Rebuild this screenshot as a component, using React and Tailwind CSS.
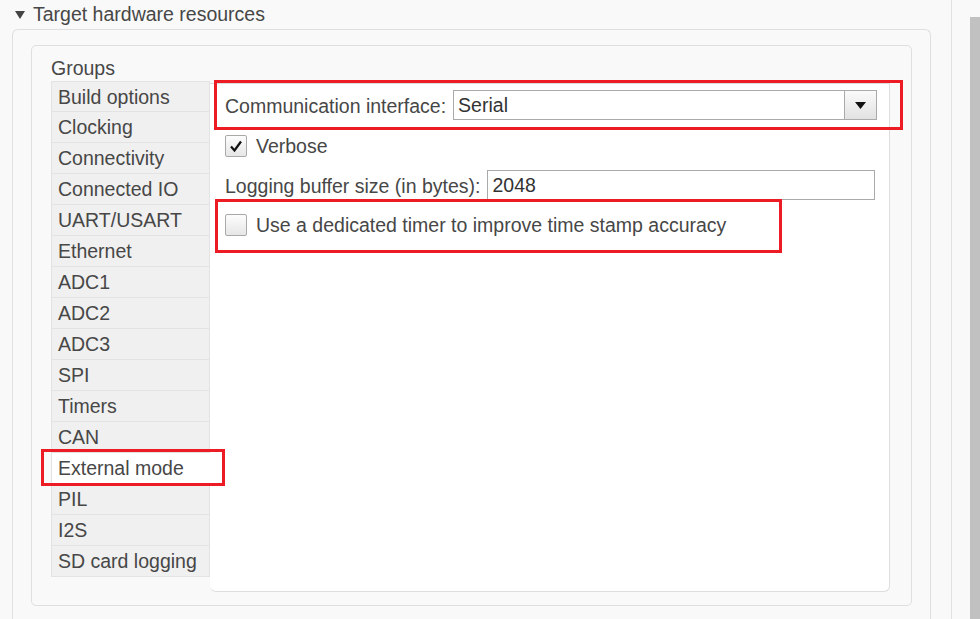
import React from "react";

const GROUPS = [
    "Build options",
    "Clocking",
    "Connectivity",
    "Connected IO",
    "UART/USART",
    "Ethernet",
    "ADC1",
    "ADC2",
    "ADC3",
    "SPI",
    "Timers",
    "CAN",
    "External mode",
    "PIL",
    "I2S",
    "SD card logging"
];

const SELECTED = "External mode";

// Checkbox in the old desktop style
const Checkbox = ({ checked }) => (
    <div className="w-[22px] h-[22px] border border-[#a9a9a9] rounded-[2px] bg-gradient-to-b from-[#fdfdfd] to-[#e6e6e6] flex items-center justify-center">
        {checked && (
            <svg width="14" height="14" viewBox="0 0 14 14">
                <path d="M2 7.5 L5.5 11.5 L12 2.5" fill="none" stroke="#111" strokeWidth="2.2" strokeLinejoin="miter" />
            </svg>
        )}
    </div>
);

export default function App() {
    return (
        <div
            className="relative w-[980px] h-[619px] overflow-hidden bg-[#f9f9f9] flex text-[19.5px] text-[#474747]"
            style={{ fontFamily: '"Liberation Sans", Arial, sans-serif' }}
        >
            {/* Main column */}
            <div className="w-[952px] h-full border-r border-[#e2e2e2] flex flex-col">
                {/* Section header */}
                <div className="h-[29px] flex items-center pl-[15px] gap-[8px]">
                    <svg width="10" height="8" viewBox="0 0 10 8">
                        <path d="M0 0 L10 0 L5 8 Z" fill="#444" />
                    </svg>
                    <span className="leading-none">Target hardware resources</span>
                </div>

                {/* Outer panel */}
                <div className="ml-[12px] w-[919px] flex-1 border border-b-0 border-[#dfdfdf] rounded-t-[6px] pt-[15px] pl-[18px]">
                    {/* Inner panel */}
                    <div className="w-[881px] h-[561px] border border-[#dfdfdf] rounded-[5px] pl-[19px] pr-[21px] pb-[13px] flex flex-col">
                        <div className="h-[35px] flex items-end pb-[3px] leading-none">Groups</div>

                        <div className="flex flex-1">
                            {/* Group list */}
                            <div className="w-[159px] flex flex-col">
                                {GROUPS.map((g, i) => (
                                    <div
                                        key={g}
                                        className={`h-[31px] flex items-center pl-[6px] pt-[2px] border-l border-b border-[#e3e3e3] ${i === 0 ? "border-t" : ""} ${
                                            g === SELECTED ? "bg-white" : "bg-[#f0f0f0] border-r"
                                        }`}
                                    >
                                        {g}
                                    </div>
                                ))}
                            </div>

                            {/* Content pane */}
                            <div className="flex-1 mt-[2px] bg-white border border-l-0 border-[#dddddd] rounded-b-[6px] pt-[6px] pl-[15px] pr-[12px]">
                                <div className="flex items-center h-[30px]">
                                    <span className="mr-[7px] pt-[3px]">Communication interface:</span>
                                    <div className="flex-1 h-[30px] border border-[#aaaaaa] flex">
                                        <div className="flex-1 flex items-center pl-[4px] pt-[1px] text-[#333]">Serial</div>
                                        <div className="w-[32px] h-full border-l border-[#aaaaaa] bg-gradient-to-b from-[#fafafa] to-[#e2e2e2] flex items-center justify-center">
                                            <svg width="11" height="7" viewBox="0 0 11 7">
                                                <path d="M0 0 L11 0 L5.5 7 Z" fill="#111" />
                                            </svg>
                                        </div>
                                    </div>
                                </div>

                                <div className="flex items-center h-[22px] mt-[15px] gap-[9px]">
                                    <Checkbox checked />
                                    <span className="pt-[1px]">Verbose</span>
                                </div>

                                <div className="flex items-center h-[30px] mt-[13px]">
                                    <span className="mr-[7px] pt-[3px]">Logging buffer size (in bytes):</span>
                                    <div className="flex-1 mr-[2px] h-[30px] border border-[#aaaaaa] flex items-center pl-[4px] pt-[1px] text-[#333]">
                                        2048
                                    </div>
                                </div>

                                <div className="flex items-center h-[22px] mt-[14px] gap-[9px]">
                                    <Checkbox />
                                    <span className="pt-[1px]">Use a dedicated timer to improve time stamp accuracy</span>
                                </div>
                            </div>
                        </div>
                    </div>
                </div>
            </div>

            {/* Scrollbar */}
            <div className="ml-[18px] w-[10px] h-full pt-[17px]">
                <div className="w-full h-full bg-[#c1c1c1]" />
            </div>

            {/* Red annotation boxes */}
            <div className="absolute left-[214px] top-[80px] w-[689px] h-[50px] border-[3px] border-[#ed1c24]" />
            <div className="absolute left-[215px] top-[199px] w-[567px] h-[54px] border-[3px] border-[#ed1c24]" />
            <div className="absolute left-[41px] top-[449px] w-[184px] h-[37px] border-[3px] border-[#ed1c24]" />
        </div>
    );
}
